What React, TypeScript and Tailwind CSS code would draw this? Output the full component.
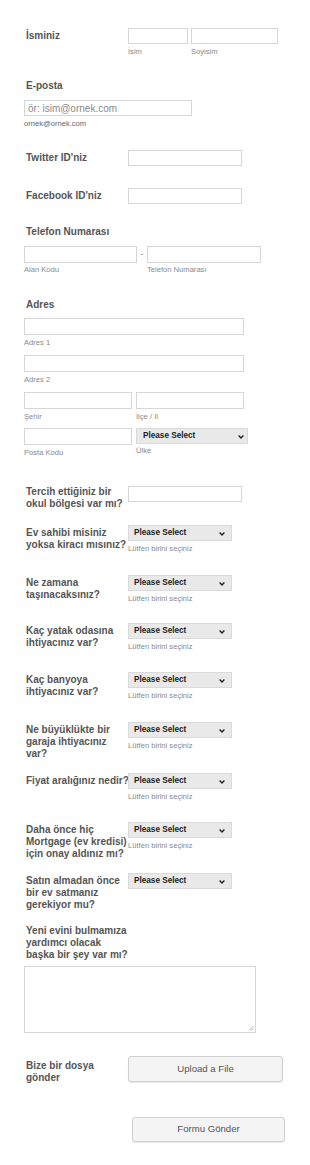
import React from "react";

const Inp = ({ w, h = 16, placeholder }: { w: number; h?: number; placeholder?: string }) => (
  <input
    readOnly
    placeholder={placeholder}
    style={{ width: w, height: h }}
    className="block border border-[#d6d6d6] bg-white px-[3px] text-[10px] text-[#333] outline-none placeholder:text-[#8a8a8a]"
  />
);

const Sub = ({ children, className = "" }: { children: React.ReactNode; className?: string }) => (
  <div className={"text-[7.6px] leading-[9px] text-[#8a8a8a] whitespace-nowrap " + className}>{children}</div>
);

const Sel = ({ w = 104, padL = 5, chevR = 6 }: { w?: number; padL?: number; chevR?: number }) => (
  <div
    style={{ width: w, paddingLeft: padL }}
    className="relative flex h-[16px] items-center border border-[#dadada] bg-[#e9e9e9] text-[8.2px] font-bold text-[#222]"
  >
    Please Select
    <svg
      style={{ right: chevR }}
      className="absolute top-[6px]"
      width="6"
      height="4"
      viewBox="0 0 6 4"
    >
      <path d="M0.6 0.6 L3 3 L5.4 0.6" fill="none" stroke="#222" strokeWidth="1.4" />
    </svg>
  </div>
);

const Label = ({ children, className = "" }: { children: React.ReactNode; className?: string }) => (
  <div className={"pl-[2px] text-[10px] font-bold leading-[12px] text-[#555] whitespace-nowrap " + className}>
    {children}
  </div>
);

const SideRow = ({
  h,
  label,
  children,
  labelMt = 1.5,
}: {
  h: number;
  label: React.ReactNode;
  children: React.ReactNode;
  labelMt?: number;
}) => (
  <div style={{ height: h }} className="flex">
    <div className="w-[104px] shrink-0" style={{ paddingTop: labelMt }}>
      <Label>{label}</Label>
    </div>
    <div>{children}</div>
  </div>
);

const SelRow = ({ h, label, sub = true, labelMt = 1.5 }: { h: number; label: React.ReactNode; sub?: boolean; labelMt?: number }) => (
  <SideRow h={h} label={label} labelMt={labelMt}>
    <Sel />
    {sub && <Sub className="mt-[2.5px]">Lütfen birini seçiniz</Sub>}
  </SideRow>
);

export default function App() {
  return (
    <div className="min-h-[1165px] w-[310px] bg-white pl-[24px] pt-[28px] font-['Liberation_Sans',Arial,sans-serif]">
      {/* İsminiz */}
      <SideRow h={52} label="İsminiz" labelMt={1.5}>
        <div className="flex gap-[3px]">
          <div>
            <Inp w={60} />
            <Sub className="mt-[2.5px]">İsim</Sub>
          </div>
          <div>
            <Inp w={87} />
            <Sub className="mt-[2.5px]">Soyisim</Sub>
          </div>
        </div>
      </SideRow>

      {/* E-posta */}
      <div className="h-[70px]">
        <Label>E-posta</Label>
        <div className="mt-[8px]">
          <Inp w={168} placeholder="ör: isim@ornek.com" />
          <Sub className="mt-[2.5px] text-[#666]">ornek@ornek.com</Sub>
        </div>
      </div>

      <SideRow h={38} label="Twitter ID'niz">
        <Inp w={114} />
      </SideRow>
      <SideRow h={38} label="Facebook ID'niz">
        <Inp w={114} />
      </SideRow>

      {/* Telefon */}
      <div className="h-[73px]">
        <Label>Telefon Numarası</Label>
        <div className="mt-[8px] flex">
          <div>
            <Inp w={113} h={17} />
            <Sub className="mt-[2px]">Alan Kodu</Sub>
          </div>
          <div className="flex w-[10px] justify-center pt-[3px] text-[9px] leading-[10px] text-[#888]">-</div>
          <div>
            <Inp w={114} h={17} />
            <Sub className="mt-[2px]">Telefon Numarası</Sub>
          </div>
        </div>
      </div>

      {/* Adres */}
      <div className="h-[187px]">
        <Label>Adres</Label>
        <div className="mt-[7px]">
          <Inp w={220} h={17} />
          <Sub className="mt-[3px]">Adres 1</Sub>
        </div>
        <div className="mt-[8px]">
          <Inp w={220} h={17} />
          <Sub className="mt-[3px]">Adres 2</Sub>
        </div>
        <div className="mt-[8px] flex gap-[4px]">
          <div>
            <Inp w={108} h={17} />
            <Sub className="mt-[3px]">Şehir</Sub>
          </div>
          <div>
            <Inp w={108} h={17} />
            <Sub className="mt-[3px]">İlçe / İl</Sub>
          </div>
        </div>
        <div className="mt-[7px] flex gap-[4px]">
          <div>
            <Inp w={108} h={17} />
            <Sub className="mt-[3px]">Posta Kodu</Sub>
          </div>
          <div>
            <Sel w={112} padL={6} chevR={3} />
            <Sub className="mt-[2px]">Ülke</Sub>
          </div>
        </div>
      </div>

      <SideRow
        h={39}
        labelMt={0}
        label={
          <>
            Tercih ettiğiniz bir
            <br />
            okul bölgesi var mı?
          </>
        }
      >
        <Inp w={114} />
      </SideRow>

      <SelRow h={50} label={<>Ev sahibi misiniz<br />yoksa kiracı mısınız?</>} />
      <SelRow h={48} label={<>Ne zamana<br />taşınacaksınız?</>} />
      <SelRow h={49} label={<>Kaç yatak odasına<br />ihtiyacınız var?</>} />
      <SelRow h={50} label={<>Kaç banyoya<br />ihtiyacınız var?</>} />
      <SelRow h={51} label={<>Ne büyüklükte bir<br />garaja ihtiyacınız<br />var?</>} />
      <SelRow h={49} label="Fiyat aralığınız nedir?" />
      <SelRow h={51} label={<>Daha önce hiç<br />Mortgage (ev kredisi)<br />için onay aldınız mı?</>} />
      <SelRow h={52} sub={false} label={<>Satın almadan önce<br />bir ev satmanız<br />gerekiyor mu?</>} />

      {/* Yeni evini */}
      <div className="h-[131px]">
        <Label>
          Yeni evini bulmamıza
          <br />
          yardımcı olacak
          <br />
          başka bir şey var mı?
        </Label>
        <div className="relative mt-[5px] h-[67px] w-[232px] border border-[#d6d6d6] bg-white">
          <svg className="absolute bottom-[1px] right-[1px]" width="6" height="6" viewBox="0 0 6 6">
            <path d="M5.5 1 L1 5.5 M5.5 3.5 L3.5 5.5" stroke="#999" strokeWidth="0.7" />
          </svg>
        </div>
      </div>

      {/* Bize bir dosya */}
      <SideRow h={61} labelMt={3.5} label={<>Bize bir dosya<br />gönder</>}>
        <div className="flex h-[26px] w-[155px] items-center justify-center rounded-[3px] border border-[#cfcfcf] bg-[#f4f4f4] text-[9.6px] text-[#555] shadow-[0_1px_1px_rgba(0,0,0,0.08)]">
          Upload a File
        </div>
      </SideRow>

      <div className="pl-[108px]">
        <div className="flex h-[25px] w-[153px] items-center justify-center rounded-[3px] border border-[#cfcfcf] bg-[#f4f4f4] text-[9.6px] text-[#555] shadow-[0_1px_1px_rgba(0,0,0,0.08)]">
          Formu Gönder
        </div>
      </div>
    </div>
  );
}
